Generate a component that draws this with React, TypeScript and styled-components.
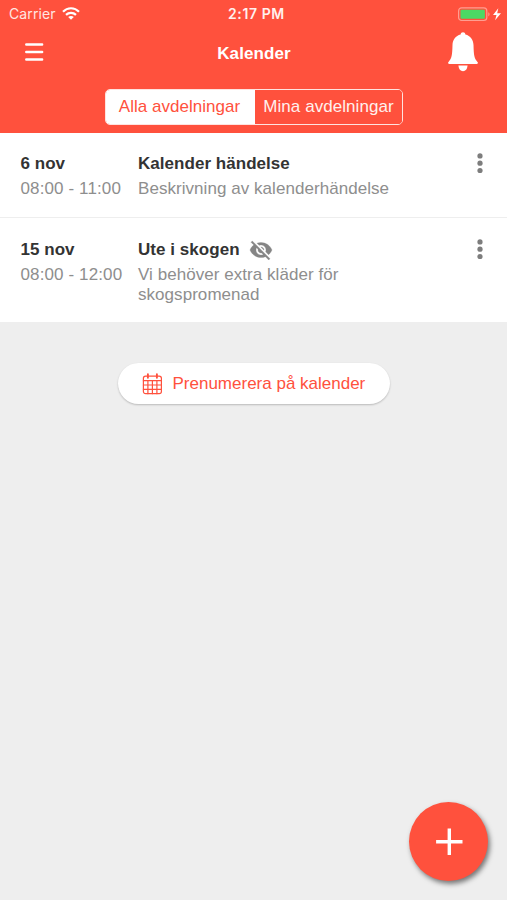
import React from "react";
import styled, { createGlobalStyle } from "styled-components";

const RED = "#ff513d";

const GlobalStyle = createGlobalStyle`
  * { box-sizing: border-box; }
  html, body { margin: 0; padding: 0; background: #eeeeee; }
  button { font: inherit; letter-spacing: inherit; border: 0; padding: 0; background: none; color: inherit; display: block; }
`;

const Screen = styled.div`
  width: 507px;
  height: 900px;
  display: flex;
  flex-direction: column;
  background: #eeeeee;
  font-family: "Liberation Sans", Arial, sans-serif;
  font-size: 17px;
  overflow: hidden;
`;

const Header = styled.header`
  height: 133px;
  flex: none;
  background: ${RED};
  color: #fff;
`;

const StatusBar = styled.div`
  height: 27px;
  display: grid;
  grid-template-columns: 219px 1fr 60px;
  align-items: center;
  padding: 0 5px 0 9px;
  font-family: Inter, sans-serif;
  font-size: 14px;
  line-height: 27px;
`;

const Carrier = styled.div`
  display: flex;
  align-items: center;
  gap: 6px;
  letter-spacing: 0.1px;
  color: #ffe6e2;
`;

const Clock = styled.div`
  font-weight: 600;
  letter-spacing: 0.6px;
  color: #fff0ed;
`;

const Power = styled.div`
  display: flex;
  align-items: center;
  justify-content: flex-end;
  height: 25px;
`;

const NavBar = styled.div`
  height: 54px;
  display: grid;
  grid-template-columns: 60px 1fr 60px;
  align-items: center;
  padding: 0 14px 0 4px;
`;

const NavButton = styled.button`
  width: 60px;
  height: 50px;
  display: flex;
  align-items: center;
  justify-content: center;
  padding-bottom: 5px;
`;

const Title = styled.h1`
  margin: 0;
  padding-left: 11px;
  text-align: center;
  font-size: 17px;
  line-height: 20px;
  letter-spacing: 0.1px;
`;

const Segments = styled.div`
  width: 298px;
  height: 36px;
  margin: 8px 0 0 105px;
  display: flex;
  border: 1.5px solid #ffe3df;
  border-radius: 5px;
  overflow: hidden;
`;

const Segment = styled.button<{ $active?: boolean }>`
  flex: ${(p) => (p.$active ? "0 0 149px" : "1")};
  padding-right: ${(p) => (p.$active ? "2px" : "0")};
  line-height: 34px;
  letter-spacing: ${(p) => (p.$active ? 0.02 : 0.06)}px;
  text-align: center;
  white-space: nowrap;
  background: ${(p) => (p.$active ? "#fff" : RED)};
  color: ${(p) => (p.$active ? RED : "#fff0ed")};
`;

const EventRow = styled.article<{ $height: number }>`
  height: ${(p) => p.$height}px;
  display: grid;
  grid-template-columns: 117.5px 1fr 40px;
  padding: 20px 6px 0 20.5px;
  background: #fff;
  border-bottom: 1px solid #eeeeee;

  & + & {
    padding-top: 21px;
    border-bottom: 0;
  }
`;

const Heading = styled.div`
  height: 22px;
  display: flex;
  align-items: center;
  gap: 9px;
  font-weight: bold;
  line-height: 22px;
  letter-spacing: 0.04px;
  color: #333;
`;

const Detail = styled.p<{ $width?: number; $spacing?: number }>`
  margin: 4px 0 0;
  width: ${(p) => (p.$width ? `${p.$width}px` : "auto")};
  line-height: 20px;
  letter-spacing: ${(p) => p.$spacing ?? 0.05}px;
  color: #8e8e8e;
`;

const MoreButton = styled.button`
  width: 38px;
  height: 22px;
  display: flex;
  align-items: center;
  justify-content: center;
`;

const Subscribe = styled.button`
  width: 272px;
  height: 41px;
  flex: none;
  margin: 41px 0 0 118px;
  display: flex;
  align-items: center;
  padding-left: 24px;
  gap: 9.5px;
  border-radius: 21px;
  background: #fff;
  color: ${RED};
  box-shadow: 0 1px 2px rgba(0, 0, 0, 0.22);
`;

const AddButton = styled.button`
  width: 79px;
  height: 79px;
  flex: none;
  margin: auto 19px 19px auto;
  display: flex;
  align-items: center;
  justify-content: center;
  border-radius: 50%;
  background: ${RED};
  box-shadow: 2px 3px 5px rgba(0, 0, 0, 0.5);
`;

const WifiIcon = () => (
  <svg width="18" height="13" viewBox="0 0 18 13" fill="none" stroke="#fff" strokeWidth="2.2">
    <path d="M1 4.700C5.500.1 12.500.1 17 4.700" />
    <path d="M4 7.900c2.900-2.800 7.100-2.800 10 0" />
    <path d="M9 12.700 6.200 10c1.600-1.500 4-1.500 5.600 0z" fill="#fff" stroke="none" />
  </svg>
);

const BatteryIcon = () => (
  <svg width="45" height="16" viewBox="0 0 45 16">
    <rect x="1.600" y="1.900" width="28.200" height="12.600" rx="3" fill="none" stroke="#ff9e91" strokeWidth="1.200" />
    <rect x="3.500" y="3.700" width="24.400" height="9" rx="1.200" fill="#4cd964" />
    <path d="M31.300 6.200v4.200c1.700-.7 1.700-3.500 0-4.200z" fill="#ff9e91" />
    <path d="M41.300 2.300 36 9h3.500l-1.400 5.300 5.900-7.100h-3.800z" fill="#fff" />
  </svg>
);

const MenuIcon = () => (
  <svg width="20" height="20" viewBox="0 0 20 20" stroke="#fff" strokeWidth="2.500" strokeLinecap="round">
    <path d="M2.300 2.600h15.800M2.300 10h15.800M2.300 17.400h15.800" />
  </svg>
);

const BellIcon = () => (
  <svg width="30" height="40" viewBox="0 0 30 40" fill="#fff">
    <path d="M15 .3c1.300 0 2.200.9 2.400 2.200 5 1.300 7.900 5.300 8.100 10.500.3 10.300.7 13.300 4 16.900.8.700.5 2-.7 2H1.200c-1.200 0-1.500-1.300-.7-2 3.300-3.600 3.700-6.600 4-16.900.2-5.200 3.100-9.200 8.100-10.500C12.800 1.200 13.700.3 15 .3z" />
    <path d="M10.400 33.600h9.200c-.4 3.600-2 5.700-4.600 5.700s-4.200-2.100-4.600-5.700z" />
  </svg>
);

const HiddenIcon = () => (
  <svg width="24" height="24" viewBox="0 0 24 24" fill="#858585" stroke="#858585" strokeWidth="0.3">
    <path d="M12 7c2.760 0 5 2.240 5 5 0 .65-.13 1.260-.36 1.830l2.920 2.920c1.510-1.260 2.700-2.890 3.430-4.750-1.730-4.390-6-7.500-11-7.500-1.400 0-2.740.25-3.980.7l2.160 2.160C10.740 7.130 11.350 7 12 7zM2 4.270l2.280 2.280.46.460C3.080 8.300 1.780 10.020 1 12c1.730 4.390 6 7.500 11 7.500 1.550 0 3.030-.3 4.380-.84l.42.420L19.730 22 21 20.730 3.270 3 2 4.270zM7.530 9.800l1.550 1.550c-.05.21-.08.43-.08.650 0 1.660 1.340 3 3 3 .22 0 .44-.03.65-.08l1.550 1.550c-.67.33-1.410.53-2.200.53-2.760 0-5-2.240-5-5 0-.79.2-1.530.53-2.200zm4.310-.78 3.150 3.150.02-.16c0-1.660-1.340-3-3-3l-.17.010z" />
  </svg>
);

const MoreIcon = () => (
  <svg width="8" height="22" viewBox="0 0 8 22" fill="#7d7d7d">
    <circle cx="4" cy="2.900" r="2.600" />
    <circle cx="4" cy="10.200" r="2.600" />
    <circle cx="4" cy="17.500" r="2.600" />
  </svg>
);

const CalendarIcon = () => (
  <svg width="21" height="22" viewBox="0 0 21 22" fill="none" stroke={RED} strokeWidth="1.200" strokeLinecap="round">
    <rect x="1.400" y="3.100" width="18" height="17.600" rx="2.200" />
    <path d="M1.400 7.700h18M1.400 12h18M1.400 16.300h18M5.900 7.700v13M10.400 7.700v13M14.900 7.700v13" />
    <path d="M5.900 1.200v3.600M14.900 1.200v3.600" strokeWidth="1.900" />
  </svg>
);

const PlusIcon = () => (
  <svg width="28" height="28" viewBox="0 0 28 28" stroke="#fff" strokeWidth="3.400">
    <path d="M14.300 .6v26.400M1.100 13.800h26.400" />
  </svg>
);

const events = [
  { date: "6 nov", time: "08:00 - 11:00", title: "Kalender händelse", text: "Beskrivning av kalenderhändelse", height: 85, hidden: false },
  { date: "15 nov", time: "08:00 - 12:00", title: "Ute i skogen", text: "Vi behöver extra kläder för skogspromenad", height: 104, hidden: true },
];

export default function App() {
  return (
    <Screen>
      <GlobalStyle />
      <Header>
        <StatusBar>
          <Carrier>Carrier <WifiIcon /></Carrier>
          <Clock>2:17 PM</Clock>
          <Power><BatteryIcon /></Power>
        </StatusBar>
        <NavBar>
          <NavButton aria-label="Meny"><MenuIcon /></NavButton>
          <Title>Kalender</Title>
          <NavButton aria-label="Aviseringar"><BellIcon /></NavButton>
        </NavBar>
        <Segments>
          <Segment $active>Alla avdelningar</Segment>
          <Segment>Mina avdelningar</Segment>
        </Segments>
      </Header>
      <main>
        {events.map((e) => (
          <EventRow key={e.date} $height={e.height}>
            <div>
              <Heading>{e.date}</Heading>
              <Detail $spacing={0.12}>{e.time}</Detail>
            </div>
            <div>
              <Heading>{e.title}{e.hidden && <HiddenIcon />}</Heading>
              <Detail $width={e.hidden ? 230 : undefined}>{e.text}</Detail>
            </div>
            <MoreButton aria-label="Mer"><MoreIcon /></MoreButton>
          </EventRow>
        ))}
      </main>
      <Subscribe><CalendarIcon />Prenumerera på kalender</Subscribe>
      <AddButton aria-label="Lägg till"><PlusIcon /></AddButton>
    </Screen>
  );
}
